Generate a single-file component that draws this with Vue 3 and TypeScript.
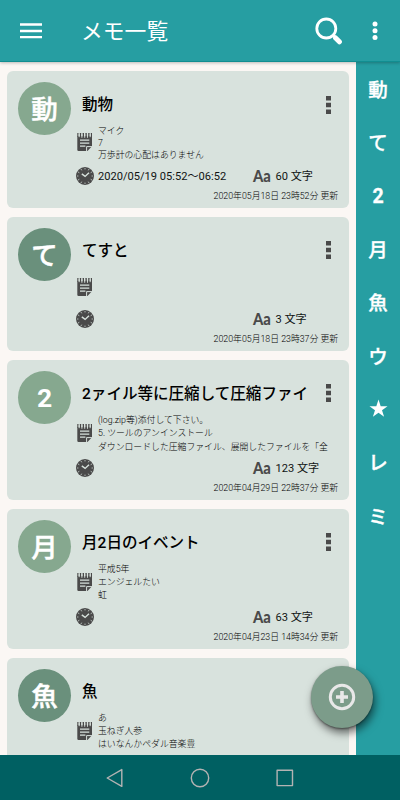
<script setup lang="ts">
interface Memo {
  mark: string
  tone: 'light' | 'dark'
  title: string
  lines: string[]
  schedule: string
  count: string
  updated: string
}

const memos: Memo[] = [
  { mark: '動', tone: 'light', title: '動物', lines: ['マイク', '7', '万歩計の心配はありません'], schedule: '2020/05/19 05:52～06:52', count: '60 文字', updated: '2020年05月18日 23時52分 更新' },
  { mark: 'て', tone: 'dark', title: 'てすと', lines: [], schedule: '', count: '3 文字', updated: '2020年05月18日 23時37分 更新' },
  { mark: '2', tone: 'light', title: '2ァイル等に圧縮して圧縮ファイ', lines: ['(log.zip等)添付して下さい。', '5. ツールのアンインストール', 'ダウンロードした圧縮ファイル、展開したファイルを「全'], schedule: '', count: '123 文字', updated: '2020年04月29日 22時37分 更新' },
  { mark: '月', tone: 'light', title: '月2日のイベント', lines: ['平成5年', 'エンジェルたい', '虹'], schedule: '', count: '63 文字', updated: '2020年04月23日 14時34分 更新' },
  { mark: '魚', tone: 'dark', title: '魚', lines: ['あ', '玉ねぎ人参', 'はいなんかペダル音楽豊'], schedule: '', count: '', updated: '' },
]

const indexMarks: string[] = ['動', 'て', '2', '月', '魚', 'ウ', '★', 'レ', 'ミ']
const ticks: number[] = Array.from({ length: 12 }, (_, i) => i * 30)
const isAscii = (s: string): boolean => /^[\x20-\x7e]+$/.test(s)
</script>

<template>
  <div class="screen">
    <header class="bar">
      <svg class="menu" viewBox="0 0 22 16"><path d="M0 1.5h22M0 8h22M0 14.2h22" /></svg>
      <h1>メモ一覧</h1>
      <svg class="search" viewBox="0 0 28 28">
        <circle cx="11.3" cy="11.5" r="9.5" />
        <path class="neck" d="M18 18l3 3" />
        <path class="grip" d="M20.6 21l3.8 3.8" />
      </svg>
      <svg class="more" viewBox="0 0 6 20">
        <circle cx="3" cy="3" r="2.5" /><circle cx="3" cy="9.7" r="2.5" /><circle cx="3" cy="16.4" r="2.5" />
      </svg>
    </header>

    <div class="content">
      <main class="list">
        <article v-for="m in memos" :key="m.mark" class="card">
          <div class="avatar" :class="[m.tone, { digit: isAscii(m.mark) }]">{{ m.mark }}</div>
          <div class="info">
            <div class="head">
              <h2>{{ m.title }}</h2>
              <svg class="dots" viewBox="0 0 5 18"><path d="M0 0h5v4.4H0zM0 6.8h5v4.4H0zM0 13.6h5V18H0z" /></svg>
            </div>
            <div class="body">
              <svg class="note" viewBox="0 0 15 18">
                <path class="ink" d="M.3 3.2H15v10L10.5 18H1.5Q.3 18 .3 16.8z" />
                <path class="ink" d="M.3 0h1.2v4H.3zM2.8 0h1.4v4H2.8zM5.6 0H7v4H5.6zM8.4 0h1.4v4H8.4zM11.2 0h1.4v4h-1.4zM13.8 0H15v4h-1.2z" />
                <path class="cut" d="M2.2 1.2v3M4.9 1.2v3.6M7.7 1.2v3.6M10.5 1.2v3.6M13.2 1.2v3" />
                <path class="rule" d="M3 7.2h9.3M3 10.2h9.3M3 13.2h5.4" />
                <path class="fold" d="M9.6 18.2v-4.6H15.2" />
              </svg>
              <div class="lines">
                <p v-for="l in m.lines" :key="l" :class="{ ascii: isAscii(l) }">{{ l }}</p>
              </div>
            </div>
            <div class="meta">
              <svg class="clock" viewBox="0 0 18 18">
                <circle cx="9" cy="9" r="9" />
                <path v-for="t in ticks" :key="t" class="tick" d="M9 1.1v1.3" :transform="`rotate(${t} 9 9)`" />
                <path class="hands" d="M5.8 6.9L9.1 9.4L13 5.7" />
              </svg>
              <span class="schedule">{{ m.schedule }}</span>
              <template v-if="m.count">
                <b class="aa">Aa</b>
                <span class="count">{{ m.count }}</span>
              </template>
            </div>
            <div class="updated">{{ m.updated }}</div>
          </div>
        </article>
      </main>
      <nav class="index">
        <span v-for="c in indexMarks" :key="c" :class="{ digit: isAscii(c) }">
          <svg v-if="c === '★'" class="star" viewBox="0 0 20 20"><path d="M10 .5l2.3 7h7.2l-5.8 4.3 2.2 7L10 14.5l-5.9 4.3 2.2-7L.5 7.5h7.2z" /></svg>
          <template v-else>{{ c }}</template>
        </span>
      </nav>
    </div>

    <footer class="system">
      <svg viewBox="0 0 20 20"><path d="M2.2 10L16.8 1.6V18.4z" /></svg>
      <svg viewBox="0 0 20 20"><circle cx="10" cy="10" r="8.7" /></svg>
      <svg viewBox="0 0 20 20"><path d="M2.1 2.2h15.4v15.4H2.1z" /></svg>
    </footer>

    <button class="fab" aria-label="追加">
      <svg viewBox="0 0 28 28"><circle cx="14" cy="14" r="11.7" /><path d="M14 8v12M8 14h12" /></svg>
    </button>
  </div>
</template>

<style>
body {
  margin: 0;
}
</style>

<style scoped>
.screen {
  position: relative;
  display: flex;
  flex-direction: column;
  width: 400px;
  height: 800px;
  overflow: hidden;
  background: #fbf7f4;
  font-family: Roboto, "Noto Sans CJK JP", sans-serif;
  color: #101413;
}
h1, h2, p {
  margin: 0;
}
svg {
  display: block;
  flex: none;
}
.bar {
  box-sizing: border-box;
  flex: none;
  display: flex;
  align-items: center;
  height: 62px;
  padding-left: 20px;
  background: #269ea2;
  border-bottom: 1px solid #118e91;
  box-shadow: 0 1px 3px rgba(0, 0, 0, .25);
  z-index: 1;
}
.menu {
  width: 22px;
  height: 16px;
  stroke: #fff;
  stroke-width: 2.3;
}
h1 {
  width: 234px;
  margin-left: 39px;
  padding-top: 2px;
  font-size: 21.8px;
  line-height: 32px;
  font-weight: 400;
  color: #fff;
}
.search {
  width: 28px;
  height: 28px;
  fill: none;
  stroke: #fff;
  stroke-width: 2.8;
}
.search .grip {
  stroke-width: 5;
  stroke-linecap: round;
}
.more {
  width: 6px;
  height: 20px;
  margin-left: 29px;
  fill: #fff;
}
.content {
  flex: 1;
  min-height: 0;
  display: flex;
  overflow: hidden;
}
.list {
  flex: 1;
  min-width: 0;
  display: flex;
  flex-direction: column;
  gap: 9px;
  padding: 9px 7px 0;
}
.card {
  flex: none;
  box-sizing: border-box;
  display: flex;
  padding: 11px 11px 7px;
  border-radius: 6px;
  background: #d8e2dd;
}
.avatar {
  flex: none;
  box-sizing: border-box;
  display: flex;
  align-items: center;
  justify-content: center;
  width: 53px;
  height: 53px;
  padding-top: 3px;
  border-radius: 50%;
  font-size: 26.5px;
  font-weight: 500;
  line-height: 1;
  color: #fff;
  -webkit-text-stroke: .5px #fff;
}
.avatar.digit {
  padding-top: 2px;
  font-weight: 700;
  -webkit-text-stroke: 0;
}
.avatar.light {
  background: #86a88f;
}
.avatar.dark {
  background: #6a907c;
}
.info {
  flex: 1;
  min-width: 0;
}
.head {
  display: flex;
  align-items: center;
  justify-content: space-between;
  height: 42px;
  margin-left: 11px;
  margin-right: 7px;
}
h2 {
  padding-top: 4px;
  font-size: 15.55px;
  line-height: 24px;
  font-weight: 500;
  color: #000;
  white-space: nowrap;
}
.dots {
  width: 5px;
  height: 18px;
  margin-top: 3px;
  fill: #4a4a4a;
}
.body {
  display: flex;
  align-items: center;
  min-height: 34px;
  margin-left: 6px;
}
.note {
  width: 15px;
  height: 18px;
  margin-right: 6px;
}
.ink {
  fill: #4a4a4a;
}
.cut, .rule, .fold {
  fill: none;
  stroke: #d8e2dd;
  stroke-width: 1.2;
}
.cut {
  stroke-width: .9;
}
.fold {
  stroke-width: 1;
}
.lines {
  white-space: nowrap;
  font-size: 8.85px;
  font-weight: 300;
  color: #000;
}
.lines p {
  box-sizing: border-box;
  height: 13.3px;
  padding-top: 1px;
  line-height: 13.3px;
}
.lines p.ascii {
  height: 10.4px;
  line-height: 10.4px;
}
.meta {
  display: flex;
  align-items: center;
  height: 30px;
  margin-left: 5px;
  font-size: 11.1px;
  line-height: 16px;
  white-space: nowrap;
}
.clock {
  width: 18px;
  height: 18px;
  margin-right: 4px;
  fill: #4a4a4a;
}
.tick, .hands {
  fill: none;
  stroke: #d8e2dd;
  stroke-width: .8;
}
.hands {
  stroke-width: 1.4;
}
.schedule {
  width: 155px;
}
.schedule, .count {
  padding-top: 3px;
}
.aa {
  width: 22.5px;
  font: 900 17.5px/20px Lato, sans-serif;
  color: #4a4a4a;
  transform: scaleX(.84);
  transform-origin: left;
}
.updated {
  height: 10px;
  line-height: 10px;
  font-size: 8.8px;
  font-weight: 300;
  color: #000;
  text-align: right;
  white-space: nowrap;
}
.index {
  flex: none;
  width: 44px;
  display: flex;
  flex-direction: column;
  background: #269ea2;
  color: #fff;
  font-size: 19.5px;
  font-weight: 500;
  -webkit-text-stroke: .3px #fff;
}
.index span {
  display: flex;
  align-items: center;
  justify-content: center;
  height: 53.3px;
}
.index span.digit {
  padding-top: 2px;
  height: 51.3px;
  font-weight: 700;
}
.star {
  width: 19px;
  height: 19px;
  fill: #fff;
}
.system {
  flex: none;
  display: flex;
  justify-content: center;
  align-items: center;
  gap: 65px;
  height: 45px;
  background: #006062;
}
.system svg {
  width: 20px;
  height: 20px;
  fill: none;
  stroke: #b3b3b3;
  stroke-width: 1.4;
  stroke-linejoin: round;
}
.fab {
  position: absolute;
  right: 27px;
  bottom: 72px;
  display: flex;
  align-items: center;
  justify-content: center;
  width: 62px;
  height: 62px;
  padding: 0;
  border: 0;
  border-radius: 50%;
  background: #7c9c8a;
  box-shadow: 2px 5px 9px rgba(0, 0, 0, .55), 0 1px 2px rgba(0, 0, 0, .4);
}
.fab svg {
  width: 28px;
  height: 28px;
  fill: none;
  stroke: #e8e8e8;
  stroke-width: 3;
}
.fab path {
  stroke-width: 3.6;
}
</style>
